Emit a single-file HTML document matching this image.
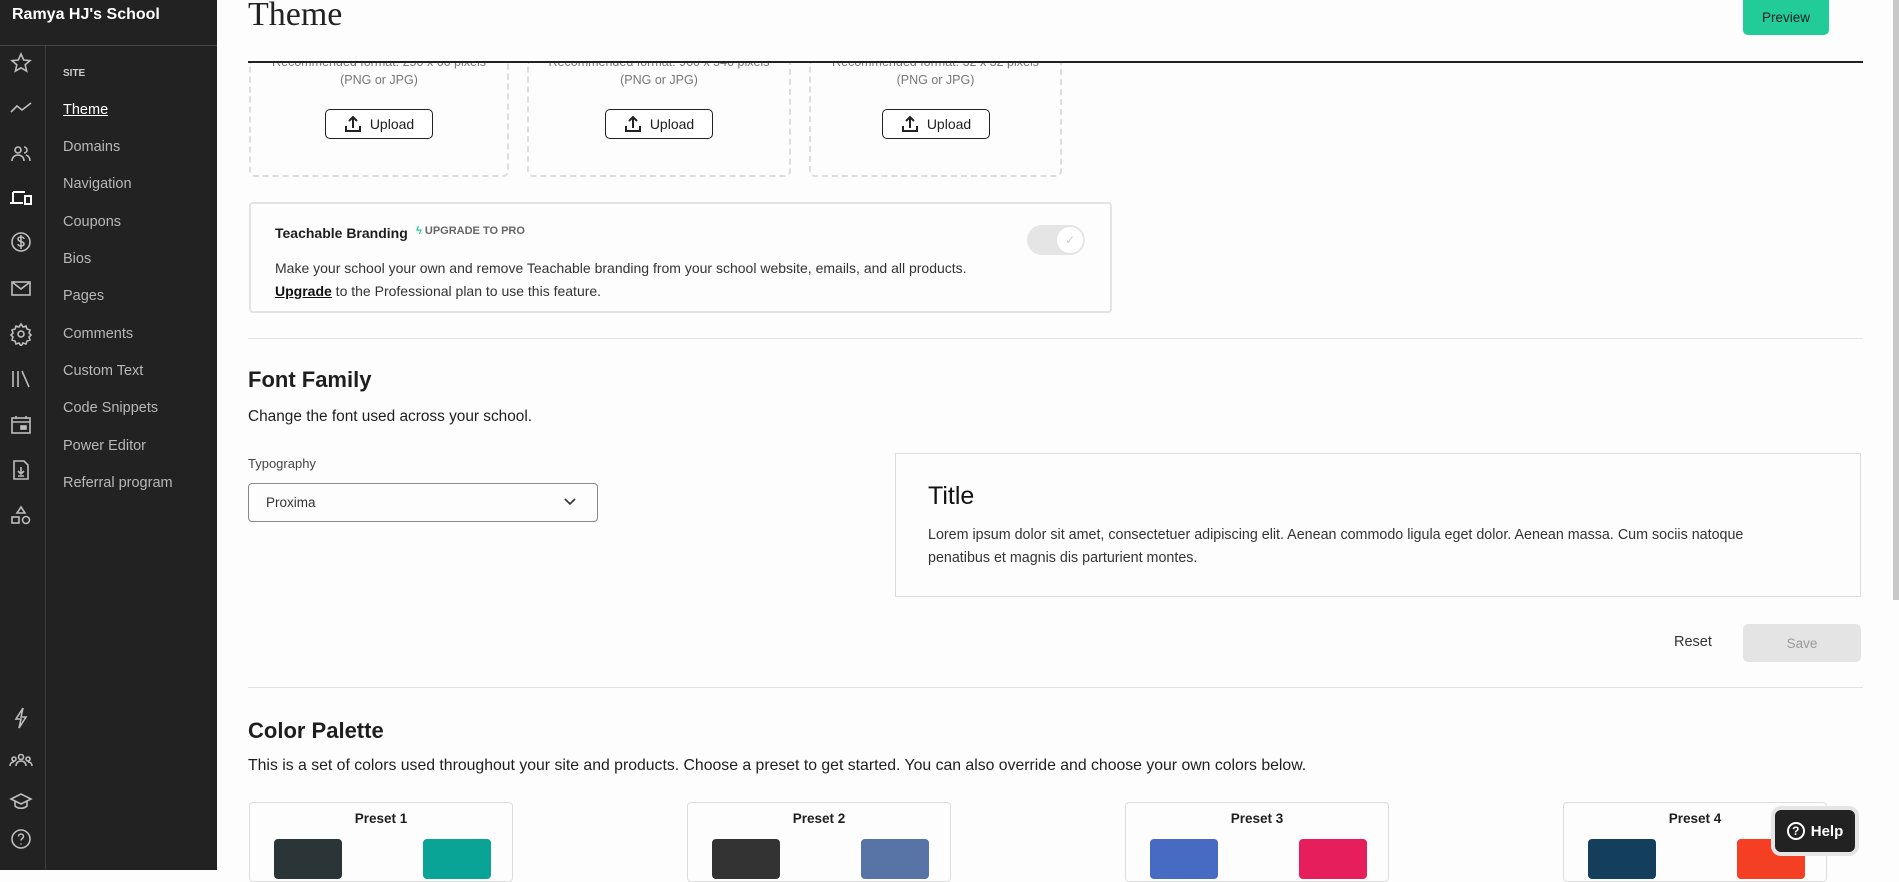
<!DOCTYPE html>
<html><head><meta charset="utf-8"><style>
*{box-sizing:border-box;margin:0;padding:0}
body{width:1899px;height:870px;overflow:hidden;background:#fdfdfd;font-family:"Liberation Sans",sans-serif;color:#1e1e1e;position:relative}
.abs{position:absolute}
#top{left:0;top:0;width:217px;height:46px;background:#222;color:#fff;font-weight:bold;font-size:16px;padding:6px 0 0 12px;border-bottom:1px solid #444}
#icons{left:0;top:46px;width:46px;height:824px;background:#222;border-right:1px solid #3a3a3a}
#sub{left:46px;top:46px;width:171px;height:824px;background:#222}
.nav{position:absolute;left:17px;color:#b8b8b8;font-size:14.5px}
.ic{position:absolute;left:9px;width:24px;height:24px}
.ic svg{width:24px;height:24px;fill:none;stroke:#bdbdbd;stroke-width:1.6}
.card{border:2px dashed #ddd;border-top:none;border-radius:0 0 6px 6px;overflow:hidden}
.sm{color:#777;font-size:12.5px;text-align:center;width:100%}
.up{position:absolute;width:108px;height:30px;border:1.5px solid #222;border-radius:5px;font-size:14px;display:flex;align-items:center;justify-content:center;gap:8px;background:#fff}
.preset{position:absolute;top:802px;width:264px;height:80px;border:1px solid #ddd;border-radius:4px;text-align:center;font-size:13.5px;font-weight:bold;padding-top:8px}
.sw{position:absolute;top:36px;width:68px;height:40px;border-radius:4px}
</style></head><body>
<div id="top" class="abs">Ramya HJ's School</div>
<div id="icons" class="abs">
<div class="ic" style="top:5px"><svg viewBox="0 0 24 24"><path d="M12 3l2.7 6 6.3.6-4.8 4.2 1.4 6.3L12 16.8 6.4 20.1l1.4-6.3L3 9.6l6.3-.6z"/></svg></div>
<div class="ic" style="top:50px"><svg viewBox="0 0 24 24"><path d="M2 16l6-6 5 4 9-7"/></svg></div>
<div class="ic" style="top:96px"><svg viewBox="0 0 24 24"><circle cx="9" cy="8" r="3"/><path d="M3 19c0-4 3-6 6-6s6 2 6 6M15 5a3 3 0 010 6M17 13c3 1 4 3 4 6"/></svg></div>
<div class="ic" style="top:140px"><svg viewBox="0 0 24 24" style="stroke:#fff;stroke-width:2"><path d="M4 6h12M4 6v11M1 17h13M16 10h6v8h-6z"/></svg></div>
<div class="ic" style="top:184px"><svg viewBox="0 0 24 24"><circle cx="12" cy="12" r="9"/><path d="M15 9c0-1-1-2-3-2s-3 1-3 2 1 2 3 2.5 3 1.5 3 2.5-1 2-3 2-3-1-3-2M12 5v14"/></svg></div>
<div class="ic" style="top:230px"><svg viewBox="0 0 24 24"><rect x="3" y="6" width="18" height="13"/><path d="M3 6l9 7 9-7"/></svg></div>
<div class="ic" style="top:276px"><svg viewBox="0 0 24 24"><circle cx="12" cy="12" r="3"/><path d="M12 2l2 3 3-1 1 3 3 1-1 3 2 2-2 2 1 3-3 1-1 3-3-1-2 3-2-3-3 1-1-3-3-1 1-3-2-2 2-2-1-3 3-1 1-3 3 1z"/></svg></div>
<div class="ic" style="top:321px"><svg viewBox="0 0 24 24"><path d="M4 4v16M9 4v16M13 4l7 16"/></svg></div>
<div class="ic" style="top:367px"><svg viewBox="0 0 24 24"><rect x="3" y="5" width="18" height="15"/><path d="M3 9h18M7 3v3M17 3v3"/><rect x="12" y="13" width="5" height="3" fill="#bdbdbd"/></svg></div>
<div class="ic" style="top:412px"><svg viewBox="0 0 24 24"><path d="M5 3h10l4 4v14H5z"/><path d="M12 9v7M9 13l3 3 3-3M9 18h6"/></svg></div>
<div class="ic" style="top:457px"><svg viewBox="0 0 24 24"><path d="M12 4l4 6H8z"/><rect x="3" y="14" width="7" height="6"/><circle cx="17" cy="17" r="3.5"/></svg></div>
<div class="ic" style="top:660px"><svg viewBox="0 0 24 24"><path d="M14 2L7 13h5l-2 9 7-11h-5z"/></svg></div>
<div class="ic" style="top:702px"><svg viewBox="0 0 24 24"><circle cx="12" cy="9" r="2.5"/><circle cx="5" cy="11" r="2"/><circle cx="19" cy="11" r="2"/><path d="M7 18c0-3 2-5 5-5s5 2 5 5M1 18c0-2 1-4 4-4M23 18c0-2-1-4-4-4"/></svg></div>
<div class="ic" style="top:744px"><svg viewBox="0 0 24 24"><path d="M2 9l10-5 10 5-10 5zM6 11v5c3 3 9 3 12 0v-5"/></svg></div>
<div class="ic" style="top:781px"><svg viewBox="0 0 24 24"><circle cx="12" cy="12" r="9"/><path d="M9.5 9.5a2.5 2.5 0 115 0c0 2-2.5 2-2.5 4M12 16.5v1"/></svg></div>
</div>
<div id="sub" class="abs">
<div class="nav" style="top:22px;font-size:10px;font-weight:bold;color:#ccc">SITE</div>
<div class="nav" style="top:56px;color:#fff;text-decoration:underline">Theme</div>
<div class="nav" style="top:93px">Domains</div>
<div class="nav" style="top:130px">Navigation</div>
<div class="nav" style="top:168px">Coupons</div>
<div class="nav" style="top:205px">Bios</div>
<div class="nav" style="top:242px">Pages</div>
<div class="nav" style="top:280px">Comments</div>
<div class="nav" style="top:317px">Custom Text</div>
<div class="nav" style="top:354px">Code Snippets</div>
<div class="nav" style="top:392px">Power Editor</div>
<div class="nav" style="top:429px">Referral program</div>
</div>

<div class="abs" style="left:248px;top:-4px;font-family:'Liberation Serif',serif;font-size:34px;color:#222">Theme</div>
<div class="abs" style="left:1743px;top:0;width:86px;height:35px;background:#22cc99;border-radius:0 0 5px 5px;font-size:13.5px;display:flex;align-items:center;justify-content:center">Preview</div>

<div class="abs card" style="left:249px;top:62px;width:260px;height:115px"><div class="sm" style="margin-top:-9px;line-height:18px">Recommended format: 250 x 60 pixels<br>(PNG or JPG)</div></div>
<div class="abs card" style="left:527px;top:62px;width:264px;height:115px"><div class="sm" style="margin-top:-9px;line-height:18px">Recommended format: 960 x 540 pixels<br>(PNG or JPG)</div></div>
<div class="abs card" style="left:809px;top:62px;width:253px;height:115px"><div class="sm" style="margin-top:-9px;line-height:18px">Recommended format: 32 x 32 pixels<br>(PNG or JPG)</div></div>
<div class="abs" style="left:248px;top:61px;width:1615px;height:2px;background:#222"></div>
<div class="up" style="left:325px;top:109px"><svg width="18" height="18" viewBox="0 0 18 18" fill="none" stroke="#222" stroke-width="2"><path d="M9 13V2M5 6l4-4 4 4M2 11v5h14v-5"/></svg>Upload</div>
<div class="up" style="left:605px;top:109px"><svg width="18" height="18" viewBox="0 0 18 18" fill="none" stroke="#222" stroke-width="2"><path d="M9 13V2M5 6l4-4 4 4M2 11v5h14v-5"/></svg>Upload</div>
<div class="up" style="left:882px;top:109px"><svg width="18" height="18" viewBox="0 0 18 18" fill="none" stroke="#222" stroke-width="2"><path d="M9 13V2M5 6l4-4 4 4M2 11v5h14v-5"/></svg>Upload</div>

<div class="abs" style="left:249px;top:202px;width:863px;height:111px;border:2px solid #e3e3e3;border-radius:4px">
<div class="abs" style="left:24px;top:21px;font-size:14px;font-weight:bold">Teachable Branding</div>
<div class="abs" style="left:165px;top:21px;font-size:11px;color:#666;font-weight:bold"><span style="color:#22cc99">ϟ</span> UPGRADE TO PRO</div>
<div class="abs" style="left:24px;top:53px;font-size:14px;color:#333;line-height:23px">Make your school your own and remove Teachable branding from your school website, emails, and all products.<br><u style="font-weight:bold;color:#111">Upgrade</u> to the Professional plan to use this feature.</div>
<div class="abs" style="left:776px;top:21px;width:58px;height:30px;background:#e5e5e5;border-radius:15px"><div class="abs" style="right:2px;top:2px;width:26px;height:26px;border-radius:50%;background:#fff;color:#ccc;font-size:12px;text-align:center;line-height:26px">✓</div></div>
</div>
<div class="abs" style="left:248px;top:338px;width:1615px;height:1px;background:#e3e3e3"></div>

<div class="abs" style="left:248px;top:367px;font-size:22px;font-weight:bold">Font Family</div>
<div class="abs" style="left:248px;top:408px;font-size:15.4px">Change the font used across your school.</div>
<div class="abs" style="left:248px;top:456px;font-size:13px;color:#444">Typography</div>
<div class="abs" style="left:248px;top:483px;width:350px;height:39px;border:1px solid #888;border-radius:4px;font-size:13.5px;padding:11px 0 0 17px;color:#333">Proxima<svg class="abs" style="right:20px;top:13px" width="14" height="10" viewBox="0 0 14 10"><path d="M2 2l5 5 5-5" fill="none" stroke="#333" stroke-width="1.6"/></svg></div>
<div class="abs" style="left:895px;top:453px;width:966px;height:144px;border:1px solid #ddd">
<div class="abs" style="left:32px;top:28px;font-size:25px;color:#111">Title</div>
<div class="abs" style="left:32px;top:70px;font-size:14.3px;color:#333;line-height:23px">Lorem ipsum dolor sit amet, consectetuer adipiscing elit. Aenean commodo ligula eget dolor. Aenean massa. Cum sociis natoque<br>penatibus et magnis dis parturient montes.</div>
</div>
<div class="abs" style="left:1674px;top:634px;font-size:14.5px;color:#333">Reset</div>
<div class="abs" style="left:1743px;top:624px;width:118px;height:38px;background:#e4e4e4;border-radius:5px;font-size:13.5px;color:#999;display:flex;align-items:center;justify-content:center">Save</div>
<div class="abs" style="left:248px;top:687px;width:1615px;height:1px;background:#e3e3e3"></div>

<div class="abs" style="left:248px;top:718px;font-size:22px;font-weight:bold">Color Palette</div>
<div class="abs" style="left:248px;top:757px;font-size:15.8px">This is a set of colors used throughout your site and products. Choose a preset to get started. You can also override and choose your own colors below.</div>
<div class="preset" style="left:249px">Preset 1<div class="sw" style="left:24px;background:#2b3436"></div><div class="sw" style="left:173px;background:#0aa496"></div></div>
<div class="preset" style="left:687px">Preset 2<div class="sw" style="left:24px;background:#333"></div><div class="sw" style="left:173px;background:#5874a6"></div></div>
<div class="preset" style="left:1125px">Preset 3<div class="sw" style="left:24px;background:#476bc2"></div><div class="sw" style="left:173px;background:#e61f5c"></div></div>
<div class="preset" style="left:1563px">Preset 4<div class="sw" style="left:24px;background:#143f5c"></div><div class="sw" style="left:173px;background:#f43f24"></div></div>
<div class="abs" style="left:1775px;top:810px;width:80px;height:42px;background:#222;border-radius:6px;box-shadow:0 0 0 4px #e5e5e5;color:#fff;font-weight:bold;font-size:15px;display:flex;align-items:center;justify-content:center;gap:6px"><span style="display:inline-block;width:18px;height:18px;border:2px solid #fff;border-radius:50%;font-size:12px;line-height:14px;text-align:center">?</span>Help</div>
<div class="abs" style="left:1893px;top:0;width:6px;height:600px;background:#c8c8c8"></div>
</body></html>
